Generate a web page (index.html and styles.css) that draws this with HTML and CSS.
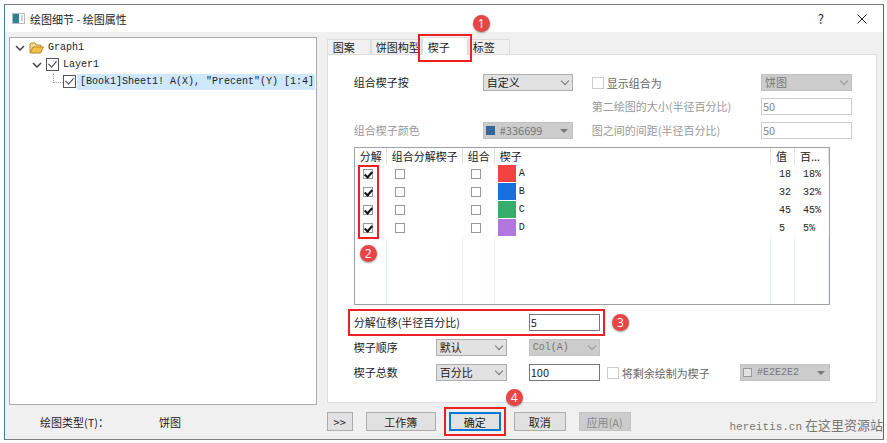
FILE: index.html
```html
<!DOCTYPE html>
<html lang="zh-CN">
  <head>
    <meta charset="utf-8" />
    <title>绘图细节 - 绘图属性</title>
    <link rel="stylesheet" href="styles.css" />
  </head>
  <body>
    <div class="window">
      <header class="titlebar">
        <svg class="app-icon" width="13" height="11" viewBox="0 0 13 11">
          <rect x="0.5" y="0.5" width="12" height="10" fill="#fff" stroke="#b5bcc2" />
          <rect x="1" y="1" width="6" height="9" fill="#2f8292" />
          <path d="M9 3h2M9 5h2M9 7h2" stroke="#9aa4ad" />
        </svg>
        <h1 class="title">绘图细节 - 绘图属性</h1>
        <button type="button" class="title-btn help" aria-label="帮助">?</button>
        <button type="button" class="title-btn" aria-label="关闭">
          <svg width="10" height="10" viewBox="0 0 10 10">
            <path d="M0.5 0.5l9 9M9.5 0.5l-9 9" stroke="#222" fill="none" />
          </svg>
        </button>
      </header>

      <main class="content">
        <ul class="tree">
          <li class="node level0">
            <svg class="arrow" width="10" height="6" viewBox="0 0 10 6">
              <path d="M1 1l4 4 4-4" stroke="#444" stroke-width="1.5" fill="none" />
            </svg>
            <svg class="folder" width="15" height="12" viewBox="0 0 15 12">
              <path d="M1 10V2l1-1h4l1 2h5v3" fill="#f7dc8b" stroke="#b8862d" />
              <path d="M1 11l3-6h10.500l-3 6z" fill="#f3bf45" stroke="#b8862d" />
            </svg>
            <span>Graph1</span>
          </li>
          <li class="node level1">
            <svg class="arrow" width="10" height="6" viewBox="0 0 10 6">
              <path d="M1 1l4 4 4-4" stroke="#444" stroke-width="1.5" fill="none" />
            </svg>
            <input type="checkbox" id="layer1" class="tree-check" checked />
            <label for="layer1">Layer1</label>
          </li>
          <li class="node level2">
            <input type="checkbox" id="plot1" class="tree-check" checked />
            <label for="plot1" class="selected">[Book1]Sheet1! A(X), "Precent"(Y) [1:4]</label>
          </li>
        </ul>

        <section class="props">
          <nav class="tabs">
            <button type="button" class="tab">图案</button>
            <button type="button" class="tab wide">饼图构型</button>
            <button type="button" class="tab active">楔子</button>
            <button type="button" class="tab last">标签</button>
            <span class="badge badge1">1</span>
          </nav>

          <div class="panel">
            <div class="combine">
              <label for="combineBy">组合楔子按</label>
              <span class="select">
                <select id="combineBy"><option>自定义</option></select>
              </span>
              <div class="check-row dim">
                <input type="checkbox" id="showAs" class="check" disabled />
                <label for="showAs">显示组合为</label>
              </div>
              <span class="select">
                <select aria-label="显示组合为" disabled><option>饼图</option></select>
              </span>

              <label for="secondSize" class="off second">第二绘图的大小(半径百分比)</label>
              <input type="text" id="secondSize" value="50" disabled />

              <label for="combineColor" class="off">组合楔子颜色</label>
              <span class="select color">
                <i class="chip blue"></i>
                <select id="combineColor" disabled><option>#336699</option></select>
              </span>
              <label for="spacing" class="off">图之间的间距(半径百分比)</label>
              <input type="text" id="spacing" value="50" disabled />
            </div>

            <div class="list">
              <table class="wedges">
                <colgroup>
                  <col class="c-explode" />
                  <col class="c-combine-explode" />
                  <col class="c-combine" />
                  <col />
                  <col class="c-value" />
                  <col class="c-percent" />
                </colgroup>
                <thead>
                  <tr>
                    <th>分解</th>
                    <th>组合分解楔子</th>
                    <th>组合</th>
                    <th>楔子</th>
                    <th>值</th>
                    <th>百...</th>
                  </tr>
                </thead>
                <tbody>
                  <tr>
                    <td><input type="checkbox" class="mini" aria-label="分解 A" checked /></td>
                    <td><input type="checkbox" class="mini" aria-label="组合分解楔子 A" /></td>
                    <td><input type="checkbox" class="mini" aria-label="组合 A" /></td>
                    <td class="name"><i class="swatch red"></i>A</td>
                    <td>18</td>
                    <td>18%</td>
                  </tr>
                  <tr>
                    <td><input type="checkbox" class="mini" aria-label="分解 B" checked /></td>
                    <td><input type="checkbox" class="mini" aria-label="组合分解楔子 B" /></td>
                    <td><input type="checkbox" class="mini" aria-label="组合 B" /></td>
                    <td class="name"><i class="swatch blue"></i>B</td>
                    <td>32</td>
                    <td>32%</td>
                  </tr>
                  <tr>
                    <td><input type="checkbox" class="mini" aria-label="分解 C" checked /></td>
                    <td><input type="checkbox" class="mini" aria-label="组合分解楔子 C" /></td>
                    <td><input type="checkbox" class="mini" aria-label="组合 C" /></td>
                    <td class="name"><i class="swatch green"></i>C</td>
                    <td>45</td>
                    <td>45%</td>
                  </tr>
                  <tr>
                    <td><input type="checkbox" class="mini" aria-label="分解 D" checked /></td>
                    <td><input type="checkbox" class="mini" aria-label="组合分解楔子 D" /></td>
                    <td><input type="checkbox" class="mini" aria-label="组合 D" /></td>
                    <td class="name"><i class="swatch purple"></i>D</td>
                    <td>5</td>
                    <td>5%</td>
                  </tr>
                  <tr class="filler">
                    <td></td>
                    <td></td>
                    <td></td>
                    <td></td>
                    <td></td>
                    <td></td>
                  </tr>
                </tbody>
              </table>
              <span class="mark mark-list"></span>
              <span class="badge badge2">2</span>
            </div>

            <div class="options">
              <label for="offset" class="span2">分解位移(半径百分比)</label>
              <div class="col3"><input type="text" id="offset" value="5" /></div>
              <span class="span2"></span>

              <label for="order">楔子顺序</label>
              <span class="select">
                <select id="order"><option>默认</option></select>
              </span>
              <span class="select col3">
                <select aria-label="顺序列" class="mono" disabled><option>Col(A)</option></select>
              </span>
              <span class="span2"></span>

              <label for="total">楔子总数</label>
              <span class="select">
                <select id="total"><option>百分比</option></select>
              </span>
              <div class="col3"><input type="text" aria-label="总数值" value="100" /></div>
              <div class="check-row dim">
                <input type="checkbox" id="rest" class="check" disabled />
                <label for="rest">将剩余绘制为楔子</label>
              </div>
              <span class="select color">
                <i class="chip gray"></i>
                <select aria-label="剩余颜色" class="mono" disabled><option>#E2E2E2</option></select>
              </span>
              <span class="mark mark-offset"></span>
              <span class="badge badge3">3</span>
            </div>
          </div>
        </section>

        <div class="plot-type">
          <span class="type-label">绘图类型(T)：</span>
          <span>饼图</span>
        </div>

        <footer class="buttons">
          <button type="button" class="btn more">&gt;&gt;</button>
          <button type="button" class="btn book">工作簿</button>
          <span class="ok-wrap">
            <button type="button" class="btn ok">确定</button>
            <span class="mark mark-ok"></span>
            <span class="badge badge4">4</span>
          </span>
          <button type="button" class="btn">取消</button>
          <button type="button" class="btn" disabled>应用(A)</button>
        </footer>
      </main>
      <div class="watermark"><span class="site">hereitis.cn</span> 在这里资源站</div>
    </div>
  </body>
</html>
```
FILE: styles.css
```css
* {
  box-sizing: border-box;
}

body {
  margin: 0;
  background: #fff;
  color: #222;
  font-family: "Noto Sans CJK SC", sans-serif;
  font-size: 11px;
  line-height: 16px;
}

button,
input,
select {
  margin: 0;
  font: inherit;
  color: inherit;
}

.window {
  position: relative;
  display: flex;
  flex-direction: column;
  min-height: calc(100vh - 7px);
  margin: 4px 3px 3px 4px;
  background: #f0f0f0;
  border: 1px solid #7d7d7d;
  border-left-color: #438397;
  border-right: 1px solid #50668f;
}

/* title bar */
.titlebar {
  display: flex;
  align-items: center;
  height: 27px;
  padding: 0 16px 0 7px;
  background: #fff;
}
.title {
  flex: 1;
  margin: 0 0 0 5px;
  font-size: 11px;
  font-weight: normal;
}
.title-btn {
  display: flex;
  padding: 0;
  border: 0;
  background: none;
}
.help {
  margin-right: 33px;
  font-size: 13px;
}

.content {
  flex: 1;
  display: grid;
  grid-template-columns: minmax(0, 308fr) minmax(0, 551fr);
  grid-template-rows: 1fr auto;
  column-gap: 10px;
  padding: 5px 6px 8px 4px;
}

/* tree */
.tree {
  margin: 0 0 7px;
  padding: 1px 0;
  list-style: none;
  background: #fff;
  border: 1px solid #a9a9b0;
  font-family: "Liberation Mono", monospace;
  font-size: 10px;
}
.node {
  display: flex;
  align-items: center;
  height: 17px;
  gap: 4px;
  white-space: nowrap;
}
.level0 {
  padding-left: 5px;
}
.level1 {
  padding-left: 22px;
}
.level2 {
  padding-left: 53px;
  position: relative;
}
.level2::before {
  content: "";
  position: absolute;
  left: 43px;
  top: 0;
  width: 9px;
  height: 9px;
  border-left: 1px dotted #aaa;
  border-bottom: 1px dotted #aaa;
}
.selected {
  margin-left: -3px;
  padding: 0 1px 0 3px;
  background: #cde8ff;
}

input[type="checkbox"] {
  appearance: none;
  position: relative;
  flex: none;
  width: 12px;
  height: 12px;
  background: #fff;
  border: 1px solid #ccc;
}
input.tree-check {
  width: 13px;
  height: 13px;
  border-color: #555;
}
.tree-check:checked::after {
  content: "";
  position: absolute;
  left: 3px;
  top: 0;
  width: 4px;
  height: 7px;
  border: solid #444;
  border-width: 0 1px 1px 0;
  transform: rotate(42deg);
}

/* tabs */
.props {
  display: flex;
  flex-direction: column;
  margin-bottom: 9px;
}
.tabs {
  position: relative;
  display: flex;
  align-items: flex-end;
  height: 17px;
}
.tab {
  width: 44px;
  height: 15px;
  padding: 0 5px;
  border: 1px solid #ddd;
  border-bottom: 0;
  background: #f0f0f0;
  line-height: 14px;
  text-align: left;
  white-space: nowrap;
}
.tab.wide {
  width: 51px;
  padding: 0 4px;
}
.tab.last {
  width: 42px;
  padding: 0 4px;
}
.tab.active {
  position: relative;
  width: 46px;
  height: 18px;
  margin-bottom: -1px;
  background: #fff;
}
.tab.active::after {
  content: "";
  position: absolute;
  inset: -4px -5px -7px -5px;
  border: 2px solid #ed2024;
}

.panel {
  flex: 1;
  padding: 19px 24px 12px 26px;
  background: #fff;
  border: 1px solid #ddd;
}

/* fields */
input[type="text"] {
  display: block;
  width: 100%;
  height: 17px;
  padding: 0 1px 2px;
  background: #fff;
  border: 1px solid #777;
}
input[type="text"]:disabled {
  color: #888;
  border-color: #ccc;
}
.select {
  position: relative;
  display: block;
}
.select select {
  appearance: none;
  display: block;
  width: 100%;
  height: 17px;
  padding: 0 3px;
  background: #e1e1e1;
  border: 1px solid #adadad;
  border-radius: 0;
  line-height: 15px;
}
.select select:disabled {
  background: #ccc;
  border-color: #c2c2c2;
  color: #777;
  opacity: 1;
}
.select::after {
  content: "";
  position: absolute;
  right: 5px;
  top: 4px;
  width: 5px;
  height: 5px;
  border: solid #777;
  border-width: 0 1px 1px 0;
  transform: rotate(45deg);
}
.select:has(:disabled)::after {
  border-color: #999;
}
.select.color select {
  padding-left: 16px;
}
.select.color::after {
  top: 7px;
  width: 0;
  height: 0;
  border: 4px solid transparent;
  border-top-color: #777;
  border-bottom: 0;
  transform: none;
}
.chip {
  position: absolute;
  left: 3px;
  top: 4px;
  width: 9px;
  height: 9px;
}
.chip.blue {
  background: #336699;
}
.chip.gray {
  background: #e2e2e2;
  border: 1px solid #999;
}
.select .mono {
  font-family: "Liberation Mono", monospace;
  font-size: 10px;
}
.off {
  color: #999;
}
.dim {
  color: #666;
}
.check-row {
  display: flex;
  align-items: center;
  gap: 3px;
}

.combine {
  display: grid;
  grid-template-columns: 129fr 90fr 188fr 91fr;
  grid-auto-rows: 17px;
  gap: 7px 0;
  white-space: nowrap;
}
.combine > :nth-child(3),
.combine > .second,
.combine > :nth-child(9) {
  margin-left: 19px;
}
.second {
  grid-column: 3;
}

/* wedge list */
.list {
  position: relative;
  margin: 8px 22px 9px 0;
  border: 1px solid #a0a0a8;
}
.wedges {
  width: 100%;
  table-layout: fixed;
  border-collapse: separate;
  border-spacing: 0;
  line-height: 17px;
}
.c-explode,
.c-combine {
  width: 32px;
}
.c-combine-explode {
  width: 76px;
}
.c-value {
  width: 24px;
}
.c-percent {
  width: 34px;
}
.wedges th {
  height: 17px;
  padding: 0 0 0 5px;
  border-right: 1px solid #e3e3e3;
  font-weight: normal;
  text-align: left;
  white-space: nowrap;
}
.wedges td {
  height: 18px;
  padding: 0 0 0 8px;
  font-family: "Liberation Mono", monospace;
  font-size: 10px;
  vertical-align: middle;
}
.wedges td.name {
  padding-left: 3px;
}
.wedges .filler td {
  height: 67px;
  border-right: 1px solid #e8f2fb;
}
.swatch {
  display: inline-block;
  width: 18px;
  height: 17px;
  margin-right: 3px;
  vertical-align: middle;
}
.swatch.red {
  background: #f44141;
}
.swatch.blue {
  background: #1a6fdf;
}
.swatch.green {
  background: #37ad6b;
}
.swatch.purple {
  background: #b177de;
}
input.mini {
  display: block;
  width: 10px;
  height: 10px;
  border-color: #999;
}
.mini:checked::after {
  content: "";
  position: absolute;
  left: 2px;
  top: 0;
  width: 3px;
  height: 6px;
  border: solid #111;
  border-width: 0 2px 2px 0;
  transform: rotate(42deg);
}

.options {
  position: relative;
  display: grid;
  grid-template-columns: 82fr 71fr 100fr 133fr 90fr;
  grid-auto-rows: 17px;
  row-gap: 8px;
  margin-right: 22px;
  white-space: nowrap;
}
.span2 {
  grid-column: span 2;
}
.col3 {
  margin: 0 7px 0 22px;
}

/* bottom row */
.plot-type {
  display: flex;
  align-items: center;
  padding-left: 31px;
}
.type-label {
  width: 119px;
}
.buttons {
  display: flex;
  gap: 13px;
}
.btn {
  width: 52px;
  height: 19px;
  padding: 0;
  background: #e1e1e1;
  border: 1px solid #adadad;
  line-height: 16px;
}
.btn:disabled {
  background: #ccc;
  border-color: #c4c4c4;
  color: #888;
}
.btn.more {
  width: 26px;
}
.btn.book {
  width: 70px;
}
.btn.ok {
  display: block;
  border: 2px solid #0078d7;
  line-height: 14px;
}
.ok-wrap {
  position: relative;
}

/* step marks */
.mark {
  position: absolute;
  border: 2px solid #ed2024;
  pointer-events: none;
}
.mark-list {
  left: 3px;
  top: 17px;
  width: 21px;
  height: 74px;
}
.mark-offset {
  left: -6px;
  top: -5px;
  right: 225px;
  height: 27px;
}
.mark-ok {
  inset: -5px;
}
.badge {
  position: absolute;
  width: 17px;
  height: 17px;
  border-radius: 50%;
  background: #e84545;
  box-shadow: 0 1px 2px #999;
  color: #fff;
  font-family: "Open Sans", sans-serif;
  font-size: 12px;
  line-height: 17px;
  text-align: center;
}
.badge1 {
  left: 146px;
  top: -22px;
}
.badge2 {
  left: 5px;
  top: 97px;
}
.badge3 {
  right: 201px;
  top: 0;
}
.badge4 {
  left: 57px;
  top: -23px;
}

.watermark {
  position: absolute;
  right: 0;
  bottom: 4px;
  color: #777;
  font-size: 13px;
}
.site {
  font-family: "Liberation Mono", monospace;
  font-size: 11px;
}
```
